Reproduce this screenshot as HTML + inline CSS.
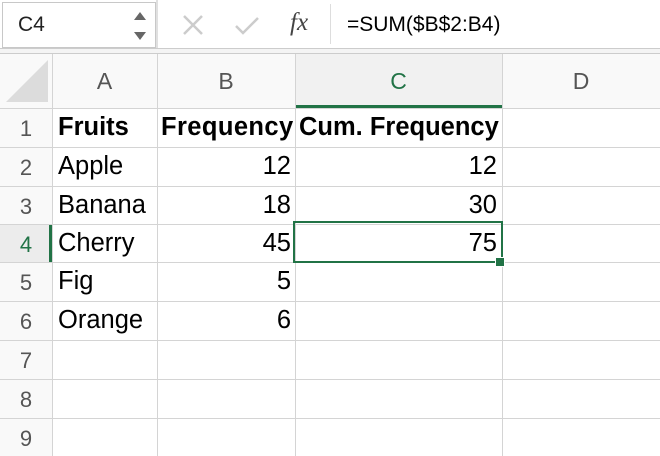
<html><head><style>
body{margin:0;width:660px;height:456px;overflow:hidden;background:#fff;font-family:"Liberation Sans",Arial,sans-serif;position:relative}
.a{position:absolute}
.t{font-size:25.5px;color:#000;line-height:39px;white-space:nowrap}
.h{color:#555;font-size:22px;text-align:center}
</style></head><body>
<div class="a" style="left:0;top:0;width:660px;height:48px;background:#fff"></div>
<div class="a" style="left:0;top:48px;width:660px;height:6px;background:#f4f4f4;border-top:1px solid #ccc;border-bottom:1px solid #ccc;box-sizing:border-box"></div>
<div class="a" style="left:2px;top:2px;width:152px;height:44px;background:#fff;border:1px solid #c8c8c8"></div>
<div class="a" style="left:156px;top:0;width:2px;height:48px;background:#e0e0e0"></div>
<div class="a" style="left:18px;top:13px;font-size:21px;color:#222">C4</div>
<svg class="a" style="left:132px;top:10px" width="16" height="32"><polygon points="2,10 14,10 8,2" fill="#666"/><polygon points="2,22 14,22 8,30" fill="#666"/></svg>
<svg class="a" style="left:182px;top:14px" width="80" height="24"><path d="M2 2L20 20M20 2L2 20" stroke="#ccc" stroke-width="2.5"/><path d="M54 12L61 19L76 4" stroke="#ccc" stroke-width="2.5" fill="none"/></svg>
<div class="a" style="left:290px;top:9px;font-family:'Liberation Serif',serif;font-style:italic;font-size:25px;color:#444">fx</div>
<div class="a" style="left:330px;top:4px;width:1px;height:40px;background:#ddd"></div>
<div class="a" style="left:347px;top:13px;font-size:21px;color:#000">=SUM($B$2:B4)</div>
<div class="a" style="left:0;top:54px;width:660px;height:54px;background:#f9f9f9"></div>
<div class="a" style="left:0;top:108px;width:52px;height:348px;background:#f9f9f9"></div>
<div class="a" style="left:0;top:224px;width:52px;height:38px;background:#ececec"></div>
<div class="a" style="left:49px;top:224px;width:3px;height:38px;background:#217346"></div>
<div class="a" style="left:295px;top:54px;width:207px;height:54px;background:#f1f1f1"></div>
<div class="a" style="left:295px;top:105px;width:207px;height:3px;background:#217346"></div>
<svg class="a" style="left:6px;top:60px" width="42" height="44"><polygon points="42,0 42,42 0,42" fill="#dcdcdc"/></svg>
<div id="g"></div>
<div class="a" style="left:293px;top:221px;width:206px;height:38px;border:2px solid #217346"></div>
<div class="a" style="left:495px;top:257px;width:8px;height:8px;background:#217346;border:1px solid #fff"></div>
<script>
var cols=[0,52,157,295,502,660],rows=[54,108,147,186,224,262,301,340,379,418,456],s='';
for(var i=1;i<cols.length-1;i++)s+='<div class="a" style="left:'+cols[i]+'px;top:54px;width:1px;height:402px;background:#d4d4d4"></div>';
for(var j=1;j<rows.length-1;j++)s+='<div class="a" style="left:0;top:'+rows[j]+'px;width:660px;height:1px;background:#d4d4d4"></div>';
var L='ABCD';for(i=0;i<4;i++)s+='<div class="a h" style="left:'+cols[i+1]+'px;width:'+(cols[i+2]-cols[i+1])+'px;top:68px;font-size:23px;color:'+(i==2?'#217346':'#555')+'">'+L[i]+'</div>';
for(j=1;j<=9;j++)s+='<div class="a h" style="left:0;width:52px;top:'+(rows[j]+8)+'px;color:'+(j==4?'#217346':'#555')+'">'+j+'</div>';
var d=[['<b>Fruits</b>','<b>Frequency</b>','<b>Cum. Frequency</b>'],['Apple',12,12],['Banana',18,30],['Cherry',45,75],['Fig',5,''],['Orange',6,'']];
for(j=0;j<d.length;j++){var y=rows[j+1];
s+='<div class="a t" style="left:58px;top:'+y+'px">'+d[j][0]+'</div>';
if(j==0){s+='<div class="a t" style="left:161px;top:'+y+'px;letter-spacing:0.4px">'+d[j][1]+'</div><div class="a t" style="left:299px;top:'+y+'px">'+d[j][2]+'</div>';}
else{s+='<div class="a t" style="left:157px;width:134px;text-align:right;top:'+y+'px">'+d[j][1]+'</div><div class="a t" style="left:295px;width:202px;text-align:right;top:'+y+'px">'+d[j][2]+'</div>';}}
document.getElementById('g').innerHTML=s;
</script>
</body></html>
